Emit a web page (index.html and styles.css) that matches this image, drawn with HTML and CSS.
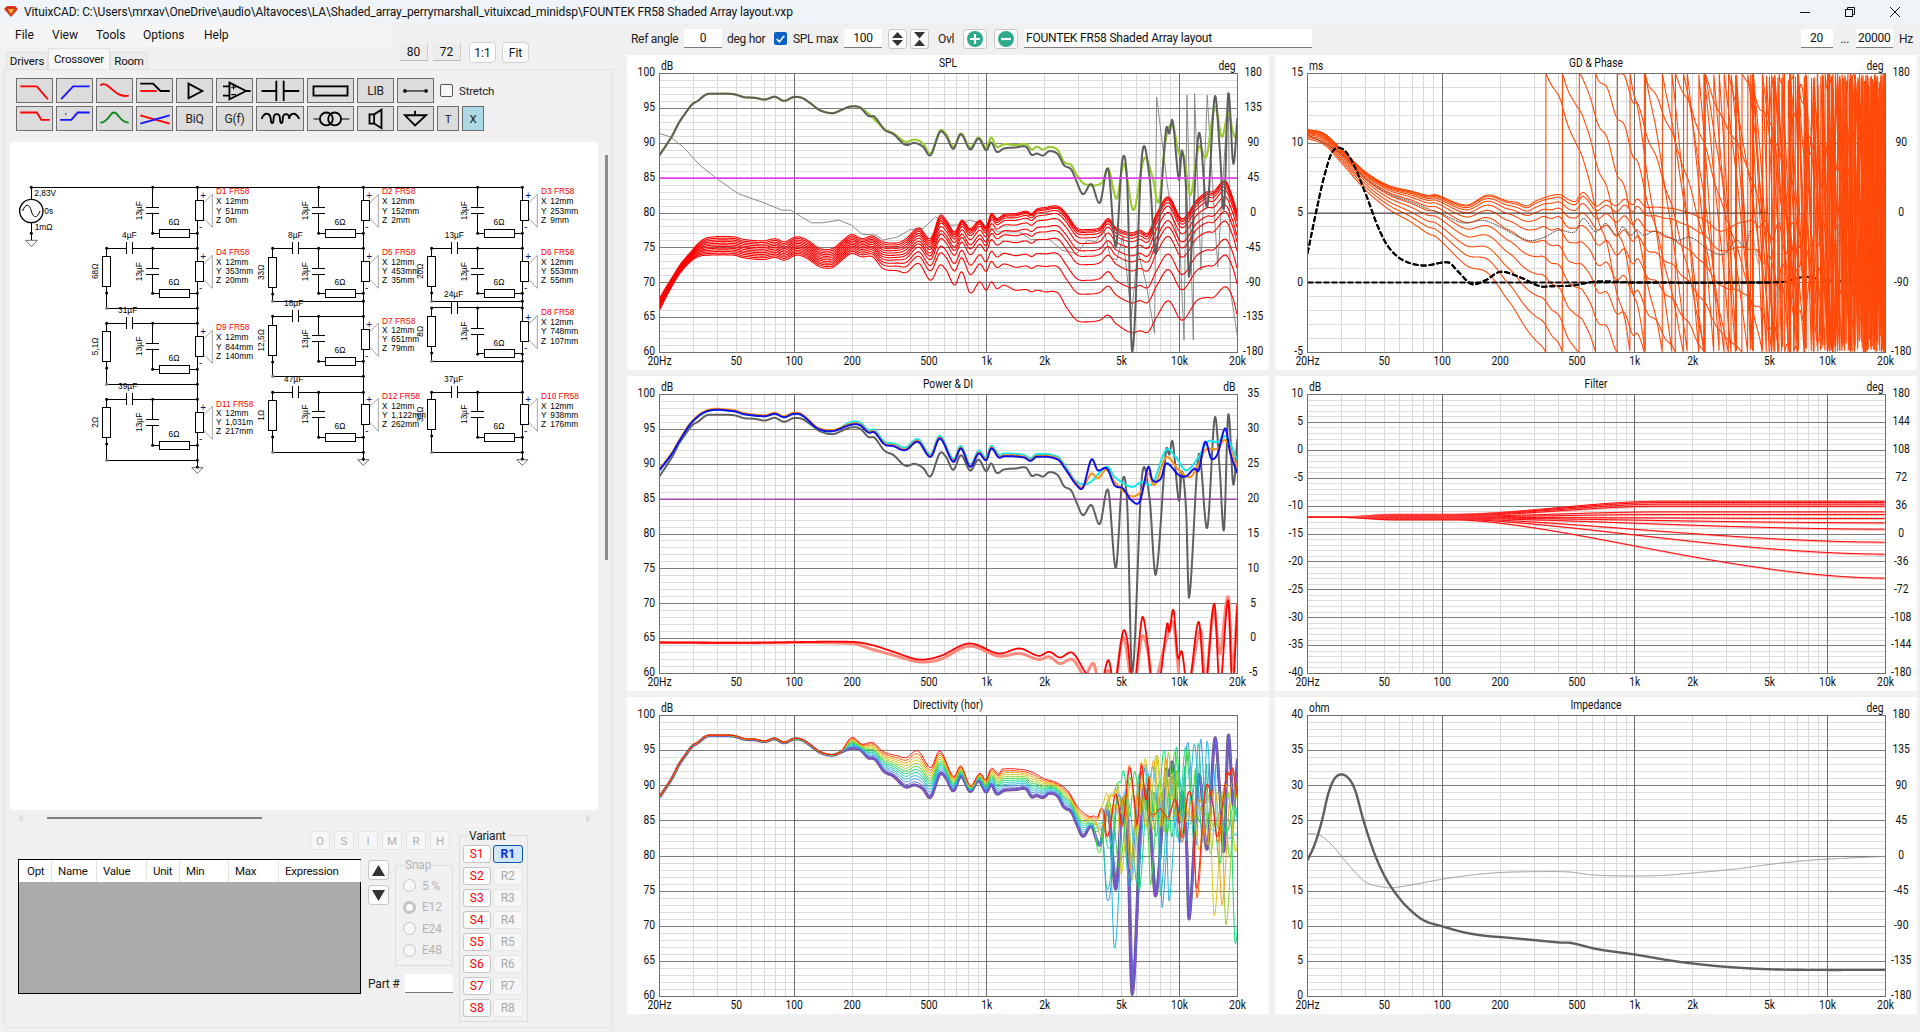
FILE: index.html
```html
<!DOCTYPE html>
<html lang="en">
<head>
<meta charset="utf-8">
<title>VituixCAD</title>
<link rel="stylesheet" href="styles.css">
</head>
<body>
<div class="app">
  <header class="titlebar">
    <svg class="logo" viewBox="0 0 14 11"><polygon points="0,3 3,0 11,0 14,3 7,11" fill="#d9331a"/><polygon points="4,3 10,3 7,8" fill="#f2c230"/></svg>
    <span class="title">VituixCAD: C:\Users\mrxav\OneDrive\audio\Altavoces\LA\Shaded_array_perrymarshall_vituixcad_minidsp\FOUNTEK FR58 Shaded Array layout.vxp</span>
    <div class="winbtns">
      <svg class="win" viewBox="0 0 10 10"><line x1="0" y1="5.5" x2="10" y2="5.5"/></svg>
      <svg class="win" viewBox="0 0 10 10"><rect x="0.5" y="2.5" width="7" height="7"/><path d="M2.5 2.5V0.5H9.5V7.5H7.5"/></svg>
      <svg class="win" viewBox="0 0 10 10"><path d="M0 0L10 10M10 0L0 10"/></svg>
    </div>
  </header>
  <div class="workspace">
    <section class="leftcol">
      <nav class="menu"><span class="m1">File</span><span class="m2">View</span><span class="m3">Tools</span><span class="m4">Options</span><span>Help</span></nav>
      <div class="tabhead">
        <div class="tabs"><span class="tab t1">Drivers</span><span class="tab t2 active">Crossover</span><span class="tab t3">Room</span></div>
        <div class="zoomset"><button class="zb flat">80</button><button class="zb flat gap2">72</button><button class="zb round gap3">1:1</button><button class="zb round gap4">Fit</button></div>
      </div>
      <div class="tabpane">
        <div class="toolrow">
          <button class="tb"><svg viewBox="0 0 37 25"><path class="red" d="M3 8H21L33 22"/></svg></button>
          <button class="tb"><svg viewBox="0 0 37 25"><path class="blue" d="M4 22L17 8H35"/></svg></button>
          <button class="tb"><svg viewBox="0 0 37 25"><path class="red" d="M3 7C12 0 18 22 34 18"/></svg></button>
          <button class="tb"><svg viewBox="0 0 37 25"><path class="blk" d="M3 5H17L25 13H35"/><path class="red" d="M3 13H21"/></svg></button>
          <button class="tb"><svg viewBox="0 0 37 25"><path class="blk" d="M12 5L27 13L12 21Z"/></svg></button>
          <button class="tb"><svg viewBox="0 0 37 25"><path class="blk" d="M13 4L31 13L13 22ZM6 8H13M6 18H13M31 13H36"/><path class="thin" d="M15 9H20M17.5 6.500V11.500M15 17H20"/></svg></button>
          <button class="tb w48"><svg viewBox="0 0 48 25"><path class="blk" d="M4 13H20M20 2V24M28 2V24M28 13H45"/></svg></button>
          <button class="tb w47"><svg viewBox="0 0 47 25"><rect class="blk" x="5" y="8" width="37" height="10"/></svg></button>
          <button class="tb txt">LIB</button>
          <button class="tb"><svg viewBox="0 0 37 25"><path class="thin" d="M7 13H30"/><circle cx="7" cy="13" r="2"/><circle cx="30" cy="13" r="2"/></svg></button>
          <label class="stretch"><span class="cb"></span>Stretch</label>
        </div>
        <div class="toolrow">
          <button class="tb"><svg viewBox="0 0 37 25"><path class="red" d="M3 6H21L26 14H35"/></svg></button>
          <button class="tb"><svg viewBox="0 0 37 25"><path class="blue" d="M3 14H15L22 6H35"/><circle cx="9" cy="7.500" r="0.800"/></svg></button>
          <button class="tb"><svg viewBox="0 0 37 25"><path class="green" d="M3 17C12 17 13 6 18 6C23 6 24 17 34 17"/></svg></button>
          <button class="tb"><svg viewBox="0 0 37 25"><path class="red" d="M3 9L35 18"/><path class="blue" d="M3 18L35 9"/></svg></button>
          <button class="tb txt">BiQ</button>
          <button class="tb txt">G(f)</button>
          <button class="tb w48"><svg viewBox="0 0 48 25"><path class="blk" d="M4 13C7 5 13 6 14 13C14 19 17 19 17 13C17 6 24 6 24 13C24 19 27 19 27 13C27 6 34 6 34 13C35 6 41 5 45 13"/></svg></button>
          <button class="tb w47"><svg viewBox="0 0 47 25"><circle class="blk" cx="19" cy="13" r="7"/><circle class="blk" cx="28" cy="13" r="7"/><path class="thin" d="M5 13H12M35 13H44"/></svg></button>
          <button class="tb"><svg viewBox="0 0 37 25"><rect class="blk" x="12" y="8" width="5" height="10"/><path class="blk" d="M17 8L25 3V23L17 18"/></svg></button>
          <button class="tb"><svg viewBox="0 0 37 25"><path class="blk" d="M18 4V9M7 9H30L18 20Z"/></svg></button>
          <button class="tb narrow txt">T</button>
          <button class="tb narrow txt on">X</button>
        </div>
        <div class="canvasrow">
          <div class="canvas" id="schematic"></div>
          <div class="vscroll"></div>
        </div>
        <div class="hscroll">
          <svg class="harrow" viewBox="0 0 5 9"><polygon points="5,0 0,4.500 5,9"/></svg>
          <span class="hthumb"></span>
          <svg class="harrow end" viewBox="0 0 5 9"><polygon points="0,0 5,4.500 0,9"/></svg>
        </div>
        <div class="bottom">
          <div class="optpart">
            <div class="optbtns"><button class="ob">O</button><button class="ob">S</button><button class="ob">I</button><button class="ob">M</button><button class="ob">R</button><button class="ob">H</button></div>
            <div class="optmain">
              <div class="tablewrap">
                <table class="opt">
                  <thead><tr><th class="c1">Opt</th><th class="c2">Name</th><th class="c3">Value</th><th class="c4">Unit</th><th class="c5">Min</th><th class="c6">Max</th><th class="c7">Expression</th></tr></thead>
                </table>
              </div>
              <div class="side">
                <div class="sidetop">
                  <div class="arrows">
                    <button class="ab"><svg viewBox="0 0 13 11"><polygon points="6.500,0 13,11 0,11"/></svg></button>
                    <button class="ab"><svg viewBox="0 0 13 11"><polygon points="0,0 13,0 6.500,11"/></svg></button>
                  </div>
                  <div class="snap">
                    <span class="legend">Snap</span>
                    <div class="rad"><span class="radio"></span>5 %</div>
                    <div class="rad"><span class="radio sel"></span>E12</div>
                    <div class="rad"><span class="radio"></span>E24</div>
                    <div class="rad"><span class="radio"></span>E48</div>
                  </div>
                </div>
                <div class="partrow"><span class="partlabel">Part #</span><span class="input partinput"></span></div>
              </div>
            </div>
          </div>
          <div class="variant">
            <span class="legend dark">Variant</span>
            <button class="vs">S1</button><button class="vr cur">R1</button>
            <button class="vs">S2</button><button class="vr">R2</button>
            <button class="vs">S3</button><button class="vr">R3</button>
            <button class="vs">S4</button><button class="vr">R4</button>
            <button class="vs">S5</button><button class="vr">R5</button>
            <button class="vs">S6</button><button class="vr">R6</button>
            <button class="vs">S7</button><button class="vr">R7</button>
            <button class="vs">S8</button><button class="vr">R8</button>
          </div>
        </div>
      </div>
    </section>
    <section class="rightcol">
      <div class="topbar">
        <span class="lb l-ref">Ref angle</span><span class="input i38">0</span>
        <span class="lb l-deg">deg hor</span>
        <span class="check"><svg viewBox="0 0 12 12"><path d="M2.500 6.500L5 9L9.500 3.500"/></svg></span>
        <span class="lb l-spl">SPL max</span><span class="input i38">100</span>
        <button class="sq first"><svg viewBox="0 0 13 16"><polygon points="6.500,1 12,7 1,7"/><polygon points="1,9 12,9 6.500,15"/></svg></button>
        <button class="sq"><svg viewBox="0 0 13 16"><polygon points="1,1 12,1 6.500,7.500"/><polygon points="6.500,8.500 12,15 1,15"/></svg></button>
        <span class="lb l-ovl">Ovl</span>
        <button class="pm"><svg viewBox="0 0 18 18"><circle cx="9" cy="9" r="9"/><path d="M9 3.500V14.500M3.500 9H14.500"/></svg></button>
        <button class="pm second"><svg viewBox="0 0 18 18"><circle cx="9" cy="9" r="9"/><path d="M3.500 9H14.500"/></svg></button>
        <span class="input desc">FOUNTEK FR58 Shaded Array layout</span>
        <span class="input i32 auto">20</span><span class="lb dots">...</span><span class="input i37">20000</span><span class="lb hz">Hz</span>
      </div>
      <div class="charts">
        <figure class="panel" data-chart="spl"></figure>
        <figure class="panel" data-chart="gd"></figure>
        <figure class="panel" data-chart="power"></figure>
        <figure class="panel" data-chart="filter"></figure>
        <figure class="panel tall" data-chart="dir"></figure>
        <figure class="panel tall" data-chart="imp"></figure>
      </div>
    </section>
  </div>
</div>
<script src="app.js"></script>
</body>
</html>
```
FILE: styles.css
```css
* { box-sizing: border-box; }
html, body { margin: 0; padding: 0; }
body { width: 1920px; height: 1032px; overflow: hidden; background: #f0f0f0; font-family: Roboto, "Liberation Sans", sans-serif; font-size: 12px; color: #111; }
button { font-family: inherit; font-size: 12px; padding: 0; margin: 0; color: #111; }
.app { display: flex; flex-direction: column; height: 1032px; }

.titlebar { height: 23px; background: #eff4f9; display: flex; align-items: center; padding-left: 4px; flex: none; }
.logo { width: 14px; height: 11px; }
.title { margin-left: 6px; font-size: 12px; letter-spacing: -.11px; white-space: nowrap; }
.winbtns { margin-left: auto; display: flex; gap: 35px; padding-right: 20px; }
.win { width: 10px; height: 10px; fill: none; stroke: #111; stroke-width: 1; }

.workspace { display: flex; flex: 1; min-height: 0; }
.leftcol { width: 620px; flex: none; }
.rightcol { flex: 1; min-width: 0; }

.menu { width: 391px; height: 24px; background: #f5f5f5; display: flex; align-items: center; padding-left: 15px; }
.menu span { flex: none; }
.m1 { width: 37px; } .m2 { width: 44px; } .m3 { width: 47px; } .m4 { width: 61px; }

.tabhead { display: flex; justify-content: space-between; align-items: flex-start; height: 26px; margin-top: -4px; padding: 0 91px 0 6px; }
.tabs { display: flex; align-items: flex-end; height: 26px; }
.tab { height: 17px; display: flex; align-items: center; justify-content: center; background: #ececec; border: 1px solid #e0e0e0; border-bottom: 0; font-size: 11.5px; letter-spacing: -.2px; }
.t1 { width: 42px; } .t2 { width: 62px; height: 21px; background: #f6f6f6; } .t3 { width: 38px; }
.zoomset { display: flex; }
.zb { height: 18px; width: 28px; background: #ececec; border: 0; border-bottom: 1px solid #bbb; border-right: 1px solid #ccc; }
.gap2 { margin-left: 5px; }
.round { background: #fdfdfd; height: 21px; width: 27px; border: 1px solid #d0d0d0; border-radius: 4px; margin-top: -1px; }
.gap3 { margin-left: 8px; } .gap4 { margin-left: 6px; }

.tabpane { width: 609px; height: 959px; margin-left: 4px; border: 1px solid #e2e2e2; padding: 8px 0 0 5px; }
.toolrow { display: flex; gap: 3px; margin-left: 6px; height: 25px; margin-bottom: 3px; align-items: center; }
.tb { width: 37px; height: 25px; background: #dcdcdc; border: 1px solid #6e6e6e; display: flex; align-items: center; justify-content: center; flex: none; }
.tb svg { display: block; flex: none; width: 35px; height: 23px; fill: #111; }
.tb.w48 { width: 48px; } .tb.w48 svg { width: 46px; }
.tb.w47 { width: 47px; } .tb.w47 svg { width: 45px; }
.tb.narrow { width: 22px; margin-left: 0; }
.tb.narrow.txt { font-size: 11.5px; }
.tb.on { background: #add8e6; }
.txt { color: #222; font-size: 12px; letter-spacing: -.2px; }
.red, .blue, .green, .blk, .thin { fill: none; stroke-width: 2; }
.red { stroke: #f00; } .blue { stroke: #1414ff; } .green { stroke: #0a8a1e; } .blk { stroke: #000; } .thin { stroke: #000; stroke-width: 1.200; }
.stretch { display: flex; align-items: center; margin-left: 3px; color: #222; font-size: 11.500px; letter-spacing: -.2px; }
.cb { width: 13px; height: 13px; border: 1px solid #555; border-radius: 2px; background: #f7f7f7; margin-right: 6px; }

.canvasrow { display: flex; gap: 7px; margin-top: 11px; }
.canvas { width: 588px; height: 668px; background: #fff; flex: none; }
.canvas svg { display: block; }
.vscroll { width: 3px; height: 405px; margin-top: 13px; background: #8c8c8c; }
.hscroll { height: 16px; width: 588px; display: flex; align-items: center; }
.harrow { width: 5px; height: 9px; fill: #dcdcdc; margin-left: 8px; flex: none; }
.harrow.end { margin-left: auto; margin-right: 7px; }
.hthumb { width: 215px; height: 2px; background: #808080; margin-left: 24px; }
.bottom { display: flex; padding-left: 8px; }

.optpart { width: 434.500px; flex: none; }
.optbtns { display: flex; justify-content: flex-end; gap: 4px; padding-right: 2.500px; margin-top: 5px; height: 19px; }
.ob { width: 20px; height: 19px; background: #f6f6f6; border: 1px solid #e4e4e4; border-radius: 3px; color: #b0b0b0; font-size: 11.500px; }
.optmain { display: flex; margin-top: 9px; }
.tablewrap { width: 342.500px; height: 135px; background: #ababab; border: 1px solid #000; flex: none; }
.opt { border-collapse: collapse; table-layout: fixed; width: 341px; background: #fff; }
.opt th { height: 22px; padding: 0 0 0 6.500px; text-align: left; font-weight: 400; border-right: 1px solid #e4e4e4; font-size: 11.500px; letter-spacing: -.25px; white-space: nowrap; }
.opt th.c1 { padding-left: 8px; }
.c1 { width: 32px; } .c2 { width: 45px; } .c3 { width: 50px; } .c4 { width: 33px; } .c5 { width: 49px; } .c6 { width: 50px; } .c7 { width: 82px; }
.side { margin-left: 7.500px; width: 84.500px; flex: none; }
.sidetop { display: flex; height: 107px; }
.arrows { width: 20.500px; flex: none; margin-top: 1px; display: flex; flex-direction: column; gap: 5px; }
.ab { width: 20.500px; height: 20px; background: #fbfbfb; border: 1px solid #c8c8c8; border-radius: 3px; display: flex; align-items: center; justify-content: center; }
.ab svg { width: 13px; height: 11px; fill: #333; }
.snap { position: relative; margin-left: 6.500px; margin-top: 6px; width: 57.500px; height: 101px; border: 1px solid #dcdcdc; padding-top: 9px; color: #b4b4b4; letter-spacing: -.2px; }
.legend { position: absolute; left: 8px; top: -7px; background: #f0f0f0; padding: 0 1px; line-height: 12px; color: #b4b4b4; letter-spacing: -.2px; }
.legend.dark { color: #222; top: -6px; }
.rad { height: 21.500px; display: flex; align-items: center; padding-left: 7px; }
.radio { width: 13px; height: 13px; border: 1px solid #c4c4c4; border-radius: 50%; margin-right: 6px; background: #f6f6f6; flex: none; }
.radio.sel { border: 3.500px solid #c4c4c4; background: #fff; }
.partrow { display: flex; align-items: center; margin-top: 8px; height: 19px; }
.partlabel { width: 37px; color: #222; letter-spacing: -.2px; }
.input { display: flex; align-items: center; justify-content: center; background: #fff; border-bottom: 1px solid #7a7a7a; height: 19px; flex: none; letter-spacing: -.2px; }
.partinput { width: 47.500px; }

.variant { position: relative; margin-left: 6.500px; margin-top: 9px; width: 68.600px; height: 187px; border: 1px solid #dcdcdc; padding: 9px 0 0 3px; display: grid; grid-template-columns: 27.500px 29.500px; column-gap: 2.500px; grid-auto-rows: 18px; row-gap: 4px; }
.vs { background: #fff; border: 1px solid #c4c4c4; border-radius: 3px; color: #f00; }
.vr { background: #f6f6f6; border: 1px solid #e6e6e6; border-radius: 3px; color: #a8a8a8; }
.vr.cur { background: #cfe6fb; border: 1px solid #0a56b0; color: #0b2fd0; font-weight: 700; }

.topbar { height: 32px; display: flex; align-items: center; padding: 0 0 1px 11px; }
.lb { flex: none; color: #222; letter-spacing: -.3px; }
.l-ref { width: 53px; } .l-deg { width: 47px; margin-left: 5px; } .l-spl { width: 51px; margin-left: 6px; } .l-ovl { width: 25px; margin-left: 9px; }
.i38 { width: 38px; }
.i32 { width: 32px; } .i37 { width: 37.500px; }
.auto { margin-left: auto; }
.dots { width: 15px; margin-left: 8px; }
.hz { margin-left: 6px; width: 21px; }
.desc { width: 288px; margin-left: 6px; justify-content: flex-start; padding-left: 2px; }
.check { width: 13px; height: 13px; background: #0a5fc4; border-radius: 2px; flex: none; display: block; }
.check svg { display: block; width: 13px; height: 13px; fill: none; stroke: #fff; stroke-width: 1.400; }
.sq { width: 19px; height: 20px; margin-left: 3px; background: #fbfbfb; border: 1px solid #c8c8c8; border-radius: 3px; display: flex; align-items: center; justify-content: center; flex: none; }
.sq.first { margin-left: 6px; }
.sq svg { width: 13px; height: 16px; fill: #333; }
.pm { width: 24px; height: 20px; background: #fbfbfb; border: 1px solid #c8c8c8; border-radius: 3px; display: flex; align-items: center; justify-content: center; flex: none; }
.pm.second { margin-left: 7px; }
.pm svg { width: 18px; height: 16px; fill: #2fa98c; stroke: #fff; stroke-width: 2.400; }
.pm svg circle { stroke: none; }

.charts { margin-left: 7px; display: grid; grid-template-columns: 642px 642px; grid-template-rows: 315px 315px 317px; gap: 6px; }
.panel { margin: 0; background: #fff; }
.panel svg { display: block; }
.axis { font-family: Roboto, "Liberation Sans", sans-serif; font-size: 12px; fill: #111; }
.sch { font-family: "Liberation Sans", sans-serif; font-size: 25px; fill: #000; }
.sch.name { fill: #f00; }
.sch.pol { fill: #14146e; font-size: 30px; }
```
FILE: app.js
```js
const NS = 'http://www.w3.org/2000/svg';
function el(tag, attrs, parent, text) {
  const e = document.createElementNS(NS, tag);
  for (const k in attrs) e.setAttribute(k, attrs[k]);
  if (text !== undefined) e.textContent = text;
  if (parent) parent.appendChild(e);
  return e;
}
// Hermite interpolation through sorted points
function ev(p, x) {
  if (x <= p[0][0]) return p[0][1];
  const n = p.length;
  if (x >= p[n - 1][0]) return p[n - 1][1];
  let i = 0;
  while (p[i + 1][0] < x) i++;
  const a = p[i], b = p[i + 1], h = b[0] - a[0], t = (x - a[0]) / h;
  const s = (q, r) => (r[1] - q[1]) / (r[0] - q[0]);
  const m0 = i > 0 ? s(p[i - 1], b) : s(a, b);
  const m1 = i < n - 2 ? s(a, p[i + 2]) : s(a, b);
  const t2 = t * t, t3 = t2 * t;
  return (2 * t3 - 3 * t2 + 1) * a[1] + (t3 - 2 * t2 + t) * h * m0 + (-2 * t3 + 3 * t2) * b[1] + (t3 - t2) * h * m1;
}
const sstep = (a, b, x) => { const t = Math.min(1, Math.max(0, (x - a) / (b - a))); return t * t * (3 - 2 * t); };
const lerp = (a, b, t) => a + (b - a) * t;
function sample(fn, x0, x1, step) { const r = []; for (let x = x0; x <= x1 + 1e-6; x += step) r.push([x, fn(x)]); return r; }

const gray = [[94,315],[110,285],[125,255],[140,218],[155,190],[172,162],[185,152],[205,133],[225,131],[270,132],[295,141],[320,143],[345,148],[368,140],[390,152],[412,141],[432,143],[450,157],[475,180],[505,189],[525,180],[548,169],[570,172],[590,197],[605,200],[628,238],[650,252],[678,284],[700,278],[720,290],[738,315],[760,246],[775,258],[792,296],[810,252],[832,298],[852,265],[870,300],[882,277],[895,305],[912,295],[940,292],[965,290],[978,314],[990,310],[1005,316],[1020,303],[1040,312],[1055,345],[1072,358],[1085,395],[1100,432],[1120,402],[1140,458],[1160,358],[1178,590],[1193,333],[1205,400],[1217,905],[1240,318],[1258,380],[1273,610],[1297,240],[1305,250],[1313,212],[1328,390],[1335,300],[1345,420],[1352,680],[1375,250],[1395,470],[1413,140],[1425,300],[1435,475],[1445,130],[1457,340],[1467,200]];
const green = gray.filter(p => p[0] <= 570).concat([[590,190],[628,236],[650,250],[678,275],[700,268],[720,280],[738,310],[760,242],[775,252],[792,290],[810,250],[832,292],[852,262],[870,292],[882,262],[895,290],[912,282],[940,285],[965,282],[978,298],[990,290],[1005,298],[1020,290],[1040,300],[1055,335],[1072,345],[1085,375],[1105,402],[1145,398],[1160,355],[1180,445],[1197,340],[1220,480],[1245,325],[1265,380],[1280,455],[1297,265],[1313,225],[1328,310],[1340,320],[1355,435],[1375,290],[1393,320],[1413,170],[1430,260],[1445,190],[1457,250],[1467,270]]);
const phaseThin = [[94,250],[120,260],[150,290],[190,345],[230,385],[280,430],[340,457],[385,480],[405,480],[455,518],[480,518],[520,510],[550,525],[575,552],[610,555],[625,570],[660,560],[690,538],[720,535],[750,500],[775,525],[800,525],[830,510],[860,520],[900,545],[950,545],[975,568],[1020,568],[1050,600],[1085,610],[1110,570],[1130,575],[1150,540],[1165,620],[1180,630],[1195,560],[1215,800],[1230,600],[1250,700],[1270,850],[1275,140],[1300,400],[1310,490],[1330,580],[1340,870],[1347,135],[1362,870],[1365,130],[1380,660],[1395,135],[1420,650],[1445,130],[1450,720],[1467,860]];
const redTop = [[94,745],[110,710],[125,680],[145,640],[172,600],[190,575],[210,562],[270,560],[295,568],[340,572],[370,566],[390,575],[420,560],[445,570],[475,595],[505,595],[530,570],[550,553],[575,565],[600,558],[625,575],[660,578],[680,565],[710,533],[738,565],[760,496],[775,510],[795,545],[812,510],[832,535],[855,510],[870,530],[882,490],[895,505],[912,493],[940,490],[965,483],[978,490],[990,477],[1010,472],[1040,468],[1060,490],[1085,533],[1110,538],[1140,532],[1160,505],[1178,532],[1215,548],[1235,540],[1255,548],[1275,490],[1303,440],[1335,505],[1370,450],[1395,425],[1410,424],[1438,392],[1455,440],[1467,490]];
const redBot = [[94,780],[110,740],[125,705],[145,665],[172,630],[190,618],[210,615],[270,615],[295,623],[340,628],[370,622],[390,630],[420,615],[445,625],[475,650],[505,652],[530,627],[550,610],[575,620],[600,620],[625,655],[660,662],[680,667],[710,640],[738,690],[760,645],[775,660],[795,705],[812,665],[832,728],[855,695],[870,720],[882,695],[895,715],[912,705],[940,720],[965,718],[978,725],[990,720],[1010,725],[1040,728],[1060,770],[1085,810],[1110,815],[1140,810],[1160,795],[1178,820],[1215,848],[1235,842],[1255,845],[1275,800],[1303,752],[1335,810],[1370,752],[1395,742],[1410,742],[1438,710],[1455,740],[1467,798]];
const nonUni = [0, .015, .03, .055, .09, .15, .23, .29, .38, .55, .7, 1];
function redFamily() {
  const out = [];
  for (let i = 0; i < 12; i++) {
    const pts = sample(x => {
      const f = lerp(i / 11, nonUni[i], sstep(500, 900, x));
      return lerp(ev(redTop, x), ev(redBot, x), f);
    }, 94, 1467, 2);
    out.push({ pts, stroke: '#ff0000', width: 1.100 });
  }
  return out;
}
// Group delay and phase chart
const gdBase = [[90,238],[130,250],[170,295],[230,365],[285,405],[340,422],[380,435],[400,433],[455,460],[480,462],[525,433],[570,450],[595,455],[620,465],[640,450],[695,430],[735,450],[755,422],[785,462],[810,445],[835,460],[855,440],[875,455],[885,438],[905,460],[930,460],[985,465],[1050,490],[1085,520],[1130,490],[1160,480],[1195,490],[1260,520],[1484,520]];
function phaseFamily() {
  const taus = [1.63, 1.35, 1.1, .85, .65, .48, .33, .22, .14, .08, .035, .01];
  return taus.map((tau, k) => {
    const pts = [];
    for (let x = 90; x <= 1484; x += .5) {
      const f = 20 * Math.pow(10, 3 * (x - 90) / 1394);
      const chaos = 110 * sstep(1130, 1380, x) * Math.sin(x * .19 + k * 2.1);
      const ripple = 7 * sstep(520, 760, x) * (1 - sstep(1050, 1200, x)) * Math.sin(x * .16) * Math.min(1, tau * 4);
      const Y = ev(gdBase, x) + ripple + chaos + 41.85 * (360 * f * tau / 1000) / 18;
      const m = ((Y - 70) % 837 + 837) % 837;
      pts.push([x, 70 + m]);
    }
    return { pts, stroke: '#ff4a0a', width: 1.100 };
  });
}
const gdDash = [[90,610],[110,490],[130,380],[150,305],[175,297],[200,340],[230,430],[260,530],[285,590],[320,630],[370,646],[430,637],[450,660],[480,698],[495,702],[520,690],[555,665],[600,680],[650,708],[680,708],[730,706],[780,695],[840,695],[880,697],[1200,697],[1240,695],[1290,680],[1340,690],[1484,695]];
const gdDot = [[90,252],[170,310],[230,385],[285,430],[340,455],[385,478],[412,490],[465,518],[520,512],[620,570],[660,562],[695,540],[735,545],[755,505],[785,545],[810,520],[835,555],[850,530],[870,555],[885,540],[900,555],[930,543],[980,570],[1015,562],[1060,600],[1095,612],[1125,570],[1145,590],[1160,540],[1180,640],[1195,480],[1215,800],[1240,400],[1270,850],[1292,200],[1330,600],[1360,850],[1385,180],[1420,800],[1484,400]];
// Power and DI chart
const blue = [[94,300],[125,248],[140,215],[172,155],[210,122],[270,123],[295,132],[345,138],[368,131],[390,141],[412,131],[432,135],[470,175],[505,183],[548,164],[570,165],[590,187],[605,187],[628,222],[650,228],[678,240],[708,215],[738,260],[760,205],[792,275],[810,235],[832,290],[852,250],[870,270],[882,235],[900,262],[912,258],[960,262],[975,272],[990,260],[1040,268],[1060,300],[1085,345],[1100,352],[1120,268],[1135,300],[1157,295],[1175,345],[1195,355],[1215,390],[1235,393],[1255,290],[1265,330],[1285,325],[1297,280],[1328,315],[1345,318],[1365,295],[1375,300],[1390,215],[1405,265],[1420,250],[1438,175],[1450,250],[1467,310]];
const head = (dy, lim) => blue.filter(p => p[0] < lim).map(p => [p[0], p[1] - dy]);
const orange = head(3, 1085).concat([[1085,340],[1100,350],[1120,310],[1135,325],[1157,298],[1175,335],[1215,378],[1240,360],[1255,310],[1270,345],[1297,262],[1328,300],[1355,320],[1375,280],[1390,240],[1420,235],[1438,210],[1467,290]]);
const cyan = blue.filter(p => p[0] < 520).concat(head(8, 1085).filter(p => p[0] >= 520)).concat([[1085,335],[1115,338],[1157,290],[1175,320],[1215,350],[1240,335],[1265,340],[1297,240],[1320,260],[1345,300],[1375,260],[1395,215],[1420,215],[1440,200],[1467,270]]);
const diRed = [[94,817],[300,818],[550,815],[600,825],[650,845],[710,868],[760,858],[830,820],[900,850],[950,835],[995,857],[1020,845],[1045,862],[1075,848],[1105,905],[1140,960],[1160,870],[1175,940],[1195,785],[1205,810],[1220,960],[1240,745],[1250,790],[1265,950],[1280,950],[1300,760],[1305,785],[1315,720],[1325,860],[1335,845],[1350,960],[1375,755],[1390,950],[1412,700],[1425,950],[1445,690],[1455,950],[1467,695]];
const diPink = [[94,817],[300,818],[550,820],[600,838],[650,855],[710,875],[760,868],[830,828],[900,858],[950,850],[995,868],[1020,860],[1045,880],[1075,868],[1105,915],[1125,880],[1140,950],[1160,900],[1175,950],[1195,800],[1220,950],[1240,800],[1255,850],[1265,950],[1300,800],[1315,760],[1330,930],[1350,950],[1380,780],[1390,950],[1410,720],[1425,850],[1445,680],[1455,900],[1467,700]];
// Directivity chart
const dirBase = gray.map(p => [p[0], p[1] - 8]);
const dirTop = gray.filter(p => p[0] < 540).map(p => [p[0], p[1] - 10]).concat([[550,128],[575,148],[600,143],[625,170],[660,183],[680,188],[708,168],[738,218],[760,168],[792,245],[810,213],[832,272],[855,235],[870,255],[882,220],[900,238],[908,223],[960,225],[985,235],[1005,250],[1040,265],[1065,290],[1090,340],[1130,370],[1155,340],[1180,395],[1467,395]]);
const rainbow = ['#ff1010','#ff5a00','#f5a010','#d8c810','#9acd32','#38d838','#10d878','#20c8a8','#20b8e0','#4098e8','#6068e0','#8050d0'];
function dirSeries() {
  const mk = i => {
    const pts = [];
    const j = 11 - i;
    const off = j * 17 + (j ? 26 * Math.sin(i * 2.3) : 0);
    for (let x = 94; x <= 1467; x += (x < 1080 ? 3 : 1)) {
      const low = lerp(ev(dirTop, x), ev(dirBase, x), i / 11);
      let y = low;
      if (x > 1080) {
        const e = lerp(345, 235, (x - 1090) / 377);
        let w = 1090 + (x - 1090) * (1 + j * .012) + off;
        if (w > 1467) w = 1090 + ((w - 1090) % 377);
        const comb = e + (ev(dirBase, w) - e) * (.5 + .5 * i / 11);
        y = lerp(low, comb, sstep(1110, 1200, x));
      }
      pts.push([x, y]);
    }
    return pts;
  };
  const s = [{ pts: mk(11), stroke: '#606060', width: 3 }, { pts: mk(11), stroke: '#8050d0', width: 2 }];
  for (let i = 10; i >= 0; i--) s.push({ pts: mk(i), stroke: rainbow[i], width: 1 });
  return s;
}
// Filter chart
function filterSeries() {
  const ends = [393, 397, 402, 408, 425, 433, 445, 458, 477, 516, 552, 624];
  const s = [];
  ends.forEach((end, k) => {
    const spread = (k - 5.5) * 1.5;
    const fn = off => x => {
      const b = 441 + spread * sstep(170, 300, x);
      const t = end < 441 ? sstep(430, 950, x) : Math.pow(sstep(450, 1500, x), .8);
      return lerp(b, end + off, t);
    };
    s.push({ pts: sample(fn(2), 90, 1484, 6), stroke: '#ff8080', width: 1.800, opacity: .55 });
    s.push({ pts: sample(fn(0), 90, 1484, 6), stroke: '#ff0000', width: 1 });
  });
  return s;
}
const impBold = [[90,495],[108,445],[125,375],[140,295],[155,250],[172,237],[190,250],[205,285],[225,375],[250,470],[275,540],[300,590],[330,635],[370,675],[414,693],[470,712],[520,722],[560,726],[640,735],[700,742],[725,743],[790,762],[880,778],[960,795],[1020,805],[1100,815],[1200,822],[1300,824],[1484,824]];
const impThin = [[90,415],[120,420],[150,450],[190,510],[230,560],[270,575],[300,577],[414,552],[480,540],[550,532],[640,529],[720,530],[780,539],[880,542],[950,540],[1020,533],[1130,520],[1200,508],[1300,495],[1400,488],[1484,483]];

const S = (pts, stroke, width, extra) => Object.assign({ pts, stroke, width, smooth: true }, extra || {});
const col1 = { zx: [94, 1467] }, col2 = { zx: [90, 1484] };
const range = (a, b, s) => { const r = []; for (let v = a; s > 0 ? v <= b : v >= b; v += s) r.push(v); return r; };
const upTo = (p, lim) => p.filter(q => q[0] <= lim);
const CHARTS = {
  spl: { ...col1, zy: [70, 907], title: 'SPL', lu: 'dB', ru: 'deg', left: range(100, 60, -5), right: range(180, -180, -45),
    series: () => [S(phaseThin, '#8a8a8a', 1, { smooth: false }), ...redFamily(), S(green, '#9acd32', 2.200), S(gray, '#5e5e5e', 2), { pts: [[94, 384], [1467, 384]], stroke: '#e040e8', width: 1.600 }] },
  gd: { ...col2, zy: [70, 907], title: 'GD & Phase', lu: 'ms', ru: 'deg', left: range(15, -5, -5), right: range(180, -180, -90),
    series: () => [S(gdDot, '#333', .8, { dash: '1 1' }), S(gdDash, '#000', 2, { dash: '6 2' }), ...phaseFamily(), { pts: [[90, 488], [1200, 488]], stroke: '#000', width: 1, dash: '1 1' }, S(upTo(gdDot, 1160), '#333', .8, { dash: '1 1' }), { pts: [[90, 697], [1210, 697]], stroke: '#000', width: 2, dash: '6 2' }, S(upTo(gdDash, 1240), '#000', 2, { dash: '6 2' })] },
  power: { ...col1, zy: [73, 910], title: 'Power & DI', lu: 'dB', ru: 'dB', left: range(100, 60, -5), right: range(35, -5, -5),
    series: () => [{ pts: [[94, 387], [1467, 387]], stroke: '#b040b8', width: 1.400 }, S(diPink, '#ff8a80', 3), S(diRed, '#ff0000', 1.800), S(gray.map(p => [p[0], p[1] + 3]), '#606060', 2), S(cyan, '#10e8f0', 2), S(orange, '#ff9010', 2), S(blue, '#1010e8', 2)] },
  filter: { ...col2, zy: [73, 910], title: 'Filter', lu: 'dB', ru: 'deg', left: range(10, -40, -5), right: range(180, -180, -36),
    series: filterSeries },
  dir: { ...col1, zy: [62, 904], title: 'Directivity (hor)', lu: 'dB', ru: '', left: range(100, 60, -5), right: [],
    series: dirSeries },
  imp: { ...col2, zy: [60, 904], title: 'Impedance', lu: 'ohm', ru: 'deg', left: range(40, 0, -5), right: range(180, -180, -45),
    series: () => [S(impThin, '#929292', 1), S(impBold, '#5e5e5e', 2.400)] }
};
const XL = [[20, '20Hz'], [50, '50'], [100, '100'], [200, '200'], [500, '500'], [1000, '1k'], [2000, '2k'], [5000, '5k'], [10000, '10k'], [20000, '20k']];
let clipId = 0;
function drawChart(fig) {
  const cfg = CHARTS[fig.dataset.chart];
  const W = 642, tall = fig.classList.contains('tall'), H = tall ? 317 : 315;
  const fl = 32.5, ft = 18.5, fw = 578, fh = tall ? 281 : 279;
  const svg = el('svg', { width: W, height: H, viewBox: `0 0 ${W} ${H}` }, fig);
  const fx = f => fl + fw * Math.log10(f / 20) / 3;
  const line = (x1, y1, x2, y2, c) => el('line', { x1, y1, x2, y2, stroke: c, 'stroke-width': 1 }, svg);
  const n = cfg.left.length - 1;
  for (let i = 0; i <= n * 5; i++) {
    const y = Math.round(ft + fh * i / (n * 5) - .5) + .5;
    if (i % 5) line(fl, y, fl + fw, y, '#dcdcdc');
  }
  for (const d of [10, 100, 1000]) for (let m = 2; m <= 9; m++) {
    const x = Math.round(fx(d * m) - .5) + .5;
    if (d * m > 20 && d * m < 20000) line(x, ft, x, ft + fh, '#d9d9d9');
  }
  for (let i = 1; i < n; i++) { const y = Math.round(ft + fh * i / n - .5) + .5; line(fl, y, fl + fw, y, '#7d7d7d'); }
  for (const f of [100, 1000, 10000]) { const x = Math.round(fx(f) - .5) + .5; line(x, ft, x, ft + fh, '#6e6e6e'); }
  const id = 'clip' + (clipId++);
  el('rect', { x: fl, y: ft, width: fw, height: fh }, el('clipPath', { id }, el('defs', {}, svg)));
  const g = el('g', { 'clip-path': `url(#${id})`, fill: 'none', 'stroke-linejoin': 'round' }, svg);
  const mx = zx => fl + fw * (zx - cfg.zx[0]) / (cfg.zx[1] - cfg.zx[0]);
  const my = zy => ft + fh * (zy - cfg.zy[0]) / (cfg.zy[1] - cfg.zy[0]);
  cfg.series().forEach(s => {
    let pts = s.pts;
    if (s.smooth) pts = sample(x => ev(s.pts, x), s.pts[0][0], s.pts[s.pts.length - 1][0], 1.2);
    const a = { points: pts.map(p => mx(p[0]).toFixed(2) + ',' + my(p[1]).toFixed(2)).join(' '), stroke: s.stroke, 'stroke-width': s.width };
    if (s.opacity) a.opacity = s.opacity;
    if (s.dash) a['stroke-dasharray'] = s.dash;
    el('polyline', a, g);
  });
  el('rect', { x: fl, y: ft, width: fw, height: fh, fill: 'none', stroke: '#707070', 'stroke-width': 1 }, svg);
  const text = (x, y, str, anchor) => el('text', { class: 'axis', transform: `translate(${x} ${y}) scale(.86 1)`, 'text-anchor': anchor }, svg, str);
  cfg.left.forEach((v, i) => text(fl - 4.5, ft + fh * i / n + 2.8, String(v), 'end'));
  cfg.right.forEach((v, i) => text(fl + fw + 15.7, ft + fh * i / (cfg.right.length - 1) + 2.8, String(v), 'middle'));
  XL.forEach(([f, s]) => text(fx(f), ft + fh + 12.8, s, 'middle'));
  text(fl + fw / 2 - .5, ft - 6.8, cfg.title, 'middle');
  text(fl + 1.5, ft - 3.5, cfg.lu, 'start');
  if (cfg.ru) text(fl + fw - 2, ft - 3.5, cfg.ru, 'end');
}
document.querySelectorAll('.panel').forEach(drawChart);

// Schematic: drawn in 3x units
function drawSchematic() {
  const host = document.getElementById('schematic');
  const svg = el('svg', { width: 588, height: 668, viewBox: '0 0 588 668' }, host);
  const g = el('g', { transform: 'translate(-10 28) scale(.33333)', stroke: '#000', 'stroke-width': 3, fill: 'none', 'shape-rendering': 'crispEdges' }, svg);
  const ln = (x1, y1, x2, y2) => el('line', { x1, y1, x2, y2 }, g);
  const dot = (x, y, c) => el('circle', { cx: x, cy: y, r: 4.5, fill: c || '#000', stroke: 'none', 'shape-rendering': 'auto' }, g);
  const txt = (x, y, s, cls, anchor) => el('text', { x, y: y + 8, class: 'sch ' + (cls || ''), stroke: 'none', 'text-anchor': anchor || 'start' }, g, s);
  const rot = (x, y, s) => el('text', { class: 'sch', stroke: 'none', 'text-anchor': 'middle', transform: `translate(${x + 8} ${y}) rotate(-90)` }, g, s);
  const gnd = (x, y) => { ln(x, y, x, y + 20); dot(x, y + 20); el('polygon', { points: `${x - 17},${y + 22} ${x + 17},${y + 22} ${x},${y + 39}`, 'stroke-width': 2, stroke: '#222', 'shape-rendering': 'auto' }, g); };
  function unit(w, u) {
    const { y0, res, plate, dt, ty, name, xyz } = u;
    const cx = w - 134;
    ln(w, y0, cx, y0);
    ln(cx, y0, cx, plate); ln(cx - 20, plate, cx + 20, plate); ln(cx - 20, plate + 18, cx + 20, plate + 18); ln(cx, plate + 18, cx, res);
    ln(cx, res, w, res);
    dot(cx, y0); dot(cx, res); dot(w, y0); dot(w, res);
    el('rect', { x: w - 114, y: res - 12, width: 90, height: 24, fill: '#fff' }, g);
    rot(cx - 40, plate + 9, '13µF');
    txt(w - 70, res - 33, '6Ω', '', 'middle');
    el('rect', { x: w - 6, y: dt, width: 24, height: 60, fill: '#fff' }, g);
    el('polyline', { points: `${w + 18},${dt + 9} ${w + 45},${dt - 18} ${w + 45},${dt + 81} ${w + 18},${dt + 52}`, stroke: '#444', 'stroke-width': 1.500, 'shape-rendering': 'auto' }, g);
    txt(w + 9, dt - 11, '+', 'pol'); txt(w + 5, dt + 81, '-', 'pol');
    txt(w + 56, ty[0], name, 'name');
    ['X', 'Y', 'Z'].forEach((a, i) => { txt(w + 56, ty[i + 1], a); txt(w + 84, ty[i + 1], xyz[i]); });
    if (u.cap) {
      const sx = w - 272, c2 = w - 204;
      ln(sx, y0, c2 - 9, y0); ln(c2 + 9, y0, cx, y0);
      el('rect', { x: c2 - 7, y: y0 - 3, width: 14, height: 6, fill: '#fff', stroke: 'none' }, g);
      ln(c2 - 9, y0 - 18, c2 - 9, y0 + 18); ln(c2 + 9, y0 - 18, c2 + 9, y0 + 18);
      txt(c2 - (u.capDx || 0), y0 - 40, u.cap, '', 'middle');
      ln(sx, y0, sx, u.bottom); ln(sx, u.bottom, w, u.bottom);
      el('rect', { x: sx - 12, y: u.box, width: 25, height: 90, fill: '#fff' }, g);
      dot(sx, y0); dot(sx, u.box + 110); dot(sx, u.bottom, '#777'); dot(w, u.bottom);
      rot(sx - 35, u.box + 45, u.r);
    }
  }
  const A = 592, B = 1090, C = 1567;
  ln(94, 52, C, 52);
  ln(A, 52, A, 871); ln(B, 52, B, 847); ln(C, 52, C, 847);
  // source
  ln(94, 52, 94, 210); dot(94, 52); dot(94, 190);
  el('circle', { cx: 94, cy: 123, r: 35, fill: '#fff', 'stroke-width': 4, 'shape-rendering': 'auto' }, g);
  el('path', { d: 'M68 123C76 100 88 100 94 123C100 146 112 146 120 123', 'stroke-width': 3, 'shape-rendering': 'auto' }, g);
  el('polygon', { points: '77,211 112,211 94,230', 'stroke-width': 2, stroke: '#222', 'shape-rendering': 'auto' }, g);
  txt(103, 69, '2,83V'); txt(133, 123, '0s'); txt(104, 171, '1mΩ');
  const U = (w, y0, res, plate, dt, ty, name, xyz, s) => unit(w, Object.assign({ y0, res, plate, dt, ty, name, xyz }, s || {}));
  U(A, 52, 190, 113, 91, [65, 93, 123, 150], 'D1 FR58', ['12mm', '51mm', '0m']);
  U(A, 235, 370, 296, 274, [248, 276, 303, 330], 'D4 FR58', ['12mm', '353mm', '20mm'], { cap: '4µF', bottom: 415, box: 259, r: '68Ω' });
  U(A, 460, 598, 520, 499, [473, 503, 531, 558], 'D9 FR58', ['12mm', '844mm', '140mm'], { cap: '31µF', capDx: 5, bottom: 643, box: 484, r: '5,1Ω' });
  U(A, 688, 826, 748, 727, [702, 729, 757, 783], 'D11 FR58', ['12mm', '1,031m', '217mm'], { cap: '39µF', capDx: 5, bottom: 871, box: 712, r: '2Ω' });
  gnd(A, 871);
  U(B, 52, 190, 113, 91, [65, 93, 123, 150], 'D2 FR58', ['12mm', '152mm', '2mm']);
  U(B, 235, 370, 296, 274, [248, 276, 303, 330], 'D5 FR58', ['12mm', '453mm', '35mm'], { cap: '8µF', bottom: 394, box: 262, r: '33Ω' });
  U(B, 439, 574, 498, 478, [453, 480, 507, 534], 'D7 FR58', ['12mm', '651mm', '79mm'], { cap: '18µF', capDx: 5, bottom: 619, box: 466, r: '12,5Ω' });
  U(B, 667, 802, 724, 703, [680, 708, 735, 762], 'D12 FR58', ['12mm', '1,122mm', '262mm'], { cap: '47µF', capDx: 5, bottom: 847, box: 691, r: '1Ω' });
  gnd(B, 847); ln(B, 847, B, 872);
  U(C, 52, 190, 113, 91, [65, 93, 123, 150], 'D3 FR58', ['12mm', '253mm', '9mm']);
  U(C, 235, 370, 296, 274, [248, 276, 303, 330], 'D6 FR58', ['12mm', '553mm', '55mm'], { cap: '13µF', bottom: 394, box: 259, r: '20Ω' });
  U(C, 414, 552, 475, 455, [428, 456, 483, 513], 'D8 FR58', ['12mm', '748mm', '107mm'], { cap: '24µF', capDx: 2, bottom: 574, box: 439, r: '8Ω' });
  U(C, 667, 802, 724, 703, [680, 708, 735, 762], 'D10 FR58', ['12mm', '938mm', '176mm'], { cap: '37µF', capDx: 2, bottom: 847, box: 688, r: '32Ω' });
  gnd(C, 847);
}
drawSchematic();
```
